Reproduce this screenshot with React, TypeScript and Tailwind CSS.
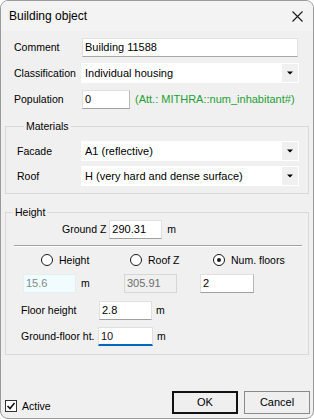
import React from "react";

const font = { fontFamily: '"Liberation Sans", Arial, sans-serif' };

function Select({ value, w }: { value: string; w: string }) {
  return (
    <div className={`${w} h-[20px] bg-white flex items-center justify-between`}>
      <span className="pl-[4px] text-[11px] leading-none text-black whitespace-nowrap">{value}</span>
      <div className="w-[16px] h-[18px] mr-[1px] bg-[#f0f0f0] flex items-center justify-center">
        <svg width="6" height="4" viewBox="0 0 6 4">
          <path d="M0 0.5 H6 L3 3.5 Z" fill="#000" />
        </svg>
      </div>
    </div>
  );
}

function Radio({ checked, label }: { checked?: boolean; label: string }) {
  return (
    <div className="flex items-center">
      <div className="w-[12px] h-[12px] rounded-full border border-[#1a1a1a] bg-white flex items-center justify-center">
        {checked && <div className="w-[4px] h-[4px] rounded-full bg-[#1a1a1a]" />}
      </div>
      <span className="ml-[6px] text-[10.5px] leading-none text-black">{label}</span>
    </div>
  );
}

export default function App() {
  return (
    <div style={font} className="w-[314px] h-[419px] bg-white">
      <div className="w-[314px] h-[419px] flex flex-col rounded-[8px] border border-[#9a9a9a] bg-[#f0f0f0] overflow-hidden">
        {/* title bar */}
        <div className="h-[30px] flex items-center justify-between pl-[8px] pr-[10px] bg-[#f3f3f3]">
          <span className="text-[12px] leading-none text-black">Building object</span>
          <svg width="11" height="11" viewBox="0 0 11 11">
            <path d="M0.5 0.5 L10.5 10.5 M10.5 0.5 L0.5 10.5" stroke="#1a1a1a" strokeWidth="1.1" />
          </svg>
        </div>

        {/* body */}
        <div className="flex flex-col pt-[7px]">
          <div className="flex items-center h-[19px] pl-[13px]">
            <span className="w-[68px] text-[10.5px] leading-none text-black">Comment</span>
            <div className="w-[216px] h-[19px] bg-white border border-[#e0e0e0] border-b-[#a8a8a8] flex items-center pl-[2px] text-[11px] leading-none">
              Building 11588
            </div>
          </div>
          <div className="flex items-center h-[20px] mt-[6px] pl-[13px]">
            <span className="w-[67px] text-[10.5px] leading-none text-black">Classification</span>
            <Select value="Individual housing" w="w-[218px]" />
          </div>
          <div className="flex items-center h-[19px] mt-[7px] pl-[13px]">
            <span className="w-[68px] text-[10.5px] leading-none text-black">Population</span>
            <div className="w-[48px] h-[19px] bg-white border border-[#e0e0e0] border-b-[#a0a0a0] border-r-[#b8b8b8] flex items-center pl-[2px] text-[11px] leading-none">
              0
            </div>
            <span className="ml-[5px] text-[11px] leading-none text-[#23a033] whitespace-nowrap">
              (Att.: MITHRA::num_inhabitant#)
            </span>
          </div>

          {/* Materials */}
          <fieldset className="ml-[4px] mt-[11px] w-[304px] border border-[#d9d9d9] pl-[11px] pb-[7px]">
            <legend className="ml-[7px] px-[2px] text-[10.5px] leading-[12px] text-black">Materials</legend>
            <div className="flex items-center h-[20px] mt-[9px]">
              <span className="w-[64px] text-[10.5px] leading-none text-black">Facade</span>
              <Select value="A1 (reflective)" w="w-[218px]" />
            </div>
            <div className="flex items-center h-[20px] mt-[5px]">
              <span className="w-[64px] text-[10.5px] leading-none text-black">Roof</span>
              <Select value="H (very hard and dense surface)" w="w-[218px]" />
            </div>
          </fieldset>

          {/* Height */}
          <fieldset className="ml-[4px] mt-[12px] w-[304px] border border-[#d9d9d9] pb-[8px]">
            <legend className="ml-[7px] px-[2px] text-[10.5px] leading-[12px] text-black">Height</legend>
            <div className="flex items-center h-[19px] mt-[2px] pl-[56px]">
              <span className="text-[10.5px] leading-none text-black">Ground Z</span>
              <div className="ml-[3px] w-[53px] h-[19px] bg-white border border-[#e0e0e0] border-b-[#a0a0a0] flex items-center pl-[2px] text-[11px] leading-none">
                290.31
              </div>
              <span className="ml-[5px] text-[10.5px] leading-none">m</span>
            </div>
            <div className="ml-[8px] mt-[6px] w-[288px] h-[2px] border-t border-[#a0a0a0] border-b border-b-white" />
            <div className="flex items-center h-[14px] mt-[6px] pl-[35px]">
              <div className="w-[89px]"><Radio label="Height" /></div>
              <div className="w-[83px]"><Radio label="Roof Z" /></div>
              <div><Radio checked label="Num. floors" /></div>
            </div>
            <div className="flex items-center h-[19px] mt-[7px] pl-[17px]">
              <div className="w-[101px] flex items-center">
                <div className="w-[53px] h-[19px] bg-[#f0fcff] border border-[#e6eef0] flex items-center pl-[2px] text-[11px] leading-none text-[#7f8a8c]">
                  15.6
                </div>
                <span className="ml-[5px] text-[10.5px] leading-none">m</span>
              </div>
              <div className="w-[76px]">
                <div className="w-[53px] h-[19px] bg-[#f0f0f0] border border-[#d6d6d6] flex items-center pl-[2px] text-[11px] leading-none text-[#6d6d6d]">
                  305.91
                </div>
              </div>
              <div className="w-[54px] h-[19px] bg-white border border-[#e0e0e0] border-b-[#a0a0a0] border-r-[#b8b8b8] flex items-center pl-[2px] text-[11px] leading-none">
                2
              </div>
            </div>
            <div className="flex items-center h-[19px] mt-[8px] pl-[15px]">
              <span className="w-[78px] text-[10.5px] leading-none text-black">Floor height</span>
              <div className="w-[53px] h-[19px] bg-white border border-[#e0e0e0] border-b-[#a0a0a0] flex items-center pl-[2px] text-[11px] leading-none">
                2.8
              </div>
              <span className="ml-[4px] text-[10.5px] leading-none">m</span>
            </div>
            <div className="flex items-center h-[19px] mt-[7px] pl-[15px]">
              <span className="w-[77px] text-[10.5px] leading-none text-black whitespace-nowrap">Ground-floor ht.</span>
              <div className="w-[55px] h-[19px] bg-white border border-[#e0e0e0] border-b-2 border-b-[#0067c0] flex items-center pl-[2px] text-[11px] leading-none text-[#1a0f1a]">
                10
              </div>
              <span className="ml-[4px] text-[10.5px] leading-none">m</span>
            </div>
          </fieldset>
        </div>

        {/* bottom */}
        <div className="mt-auto flex items-end justify-between pl-[4px] pr-[3px] pb-[4px]">
          <div className="flex items-center mb-[2px]">
            <div className="w-[12px] h-[12px] border border-[#333] bg-white flex items-center justify-center">
              <svg width="10" height="10" viewBox="0 0 10 10">
                <path d="M1.5 5 L4 7.5 L8.5 2" stroke="#111" strokeWidth="1.6" fill="none" />
              </svg>
            </div>
            <span className="ml-[5px] text-[10.5px] leading-none text-black">Active</span>
          </div>
          <div className="flex items-center gap-[6px]">
            <div className="w-[66px] h-[23px] border-2 border-[#111] bg-[#efefef] flex items-center justify-center text-[11px] leading-none">
              OK
            </div>
            <div className="w-[66px] h-[23px] border border-[#8a8a8a] bg-[#efefef] flex items-center justify-center text-[11px] leading-none">
              Cancel
            </div>
          </div>
        </div>
      </div>
    </div>
  );
}
